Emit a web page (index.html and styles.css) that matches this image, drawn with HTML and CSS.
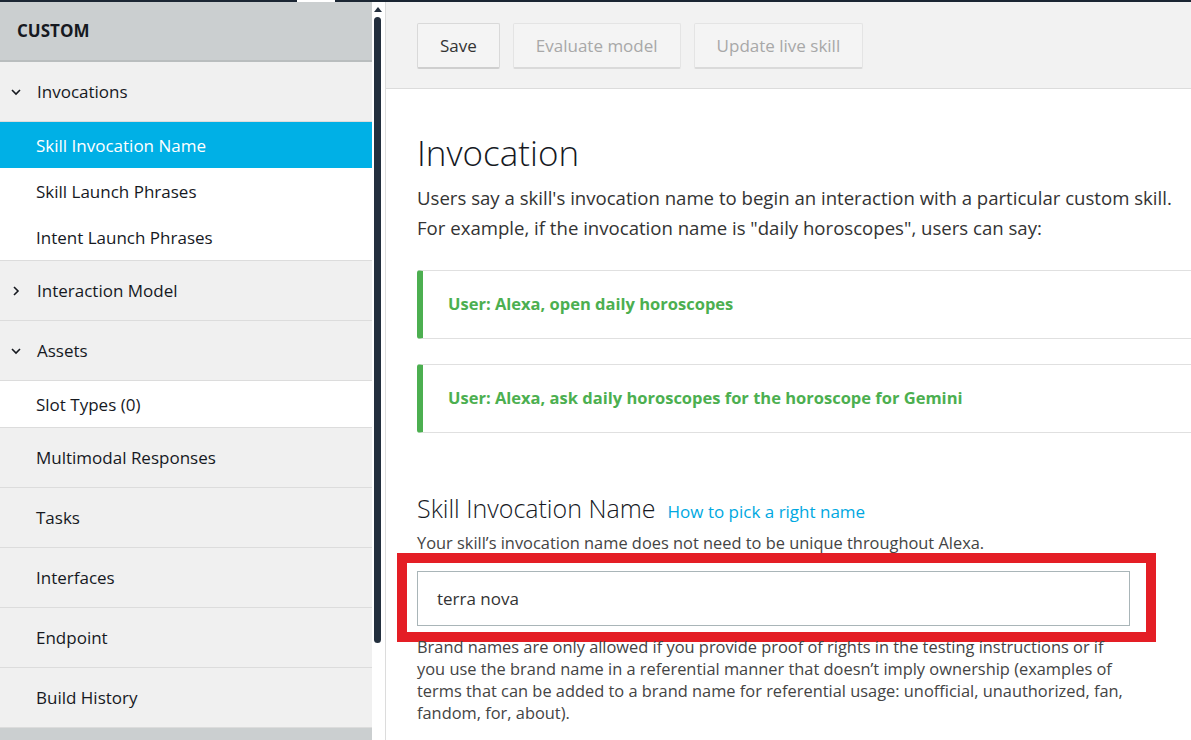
FILE: index.html
```html
<!doctype html>
<html lang="en">
<head>
  <meta charset="UTF-8">
  <title>Invocation - Build</title>
  <link rel="stylesheet" href="styles.css">
</head>
<body>
  <div class="topline"><span class="topline-gap"></span></div>
  <div class="page">
    <div class="sidebar">
      <div class="nav">
        <div class="nav-title">CUSTOM</div>

        <div class="nav-group">
          <svg class="chev" width="10" height="10" viewBox="0 0 10 10"><path d="M1 3 L5 7 L9 3" fill="none" stroke="#16191f" stroke-width="1.6"/></svg>
          Invocations
        </div>
        <div class="nav-children">
          <div class="nav-item active">Skill Invocation Name</div>
          <div class="nav-item">Skill Launch Phrases</div>
          <div class="nav-item">Intent Launch Phrases</div>
        </div>

        <div class="nav-group">
          <svg class="chev" width="10" height="10" viewBox="0 0 10 10"><path d="M3 1 L7 5 L3 9" fill="none" stroke="#16191f" stroke-width="1.6"/></svg>
          Interaction Model
        </div>

        <div class="nav-group">
          <svg class="chev" width="10" height="10" viewBox="0 0 10 10"><path d="M1 3 L5 7 L9 3" fill="none" stroke="#16191f" stroke-width="1.6"/></svg>
          Assets
        </div>
        <div class="nav-children">
          <div class="nav-item">Slot Types (0)</div>
        </div>

        <div class="nav-group plain">Multimodal Responses</div>
        <div class="nav-group plain">Tasks</div>
        <div class="nav-group plain">Interfaces</div>
        <div class="nav-group plain">Endpoint</div>
        <div class="nav-group plain">Build History</div>
        <div class="nav-foot"></div>
      </div>
      <div class="scrollbar">
        <div class="scroll-arrow"></div>
        <div class="scroll-thumb"></div>
      </div>
    </div>

    <div class="main">
      <div class="toolbar">
        <div class="btn">Save</div>
        <div class="btn disabled">Evaluate model</div>
        <div class="btn disabled">Update live skill</div>
      </div>

      <div class="content">
        <h1>Invocation</h1>
        <p class="intro">Users say a skill's invocation name to begin an interaction with a particular custom skill.<br>
          For example, if the invocation name is "daily horoscopes", users can say:</p>

        <div class="example">User: Alexa, open daily horoscopes</div>
        <div class="example">User: Alexa, ask daily horoscopes for the horoscope for Gemini</div>

        <div class="section-head">
          <h2>Skill Invocation Name</h2>
          <span class="link">How to pick a right name</span>
        </div>
        <p class="hint">Your skill’s invocation name does not need to be unique throughout Alexa.</p>

        <div class="highlight">
          <div class="field">terra nova</div>
        </div>

        <p class="note">Brand names are only allowed if you provide proof of rights in the testing instructions or if you use the brand name in a referential manner that doesn’t imply ownership (examples of terms that can be added to a brand name for referential usage: unofficial, unauthorized, fan, fandom, for, about).</p>
      </div>
    </div>
  </div>
</body>
</html>
```

FILE: styles.css
```css
body {
    margin: 0;
    font-family: "Open Sans", Arial, sans-serif;
    color: #16191f;
    background: #fff;
    height: 740px;
    overflow: hidden;
}

.topline {
    height: 2px;
    background: #1b2633;
    display: flex;
}

.topline-gap {
    width: 38px;
    margin-left: 297px;
    background: #fff;
}

.page {
    display: flex;
    height: 738px;
}

/* left navigation */

.sidebar {
    display: flex;
    width: 385px;
    border-right: 1px solid #dcdcdc;
    flex-shrink: 0;
}

.nav {
    width: 372px;
    background: #cbcfd0;
}

.nav-title {
    height: 56px;
    padding-bottom: 2px;
    border-bottom: 2px solid #b9bdbe;
    padding-left: 17px;
    display: flex;
    align-items: center;
    font-size: 17px;
    font-weight: 700;
}

.nav-group {
    height: 59px;
    border-bottom: 1px solid #dcdcdc;
    background: #f0f0f0;
    display: flex;
    align-items: center;
    padding-left: 11px;
    font-size: 17px;
}

.nav-group.plain {
    padding-left: 36px;
}

.nav-group:last-of-type {
    border-bottom: 0;
}

.chev {
    margin-right: 16px;
    margin-top: 1px;
}

.nav-children {
    background: #fff;
    border-bottom: 1px solid #dcdcdc;
}

.nav-item {
    height: 46px;
    display: flex;
    align-items: center;
    padding-left: 36px;
    font-size: 17px;
}

.nav-item.active {
    background: #00b0e6;
    color: #fff;
}

.nav-foot {
    height: 14px;
}

.scrollbar {
    width: 13px;
    background: #fff;
    display: flex;
    flex-direction: column;
    align-items: center;
}

.scroll-arrow {
    width: 0;
    height: 0;
    border-left: 4px solid transparent;
    border-right: 4px solid transparent;
    border-bottom: 5px solid #232f3e;
    margin-top: 5px;
    margin-left: -2px;
}

.scroll-thumb {
    width: 7px;
    height: 626px;
    margin-top: 5px;
    margin-left: -2px;
    border-radius: 4px;
    background: #232f3e;
}

/* main */

.main {
    flex: 1;
    overflow: hidden;
}

.toolbar {
    height: 87px;
    background: #f2f2f2;
    border-bottom: 1px solid #dcdcdc;
    display: flex;
    align-items: flex-start;
    gap: 13px;
    padding-left: 31px;
    box-sizing: border-box;
    padding-top: 21px;
}

.btn {
    height: 43px;
    padding: 0 22px;
    display: flex;
    align-items: center;
    border: 1px solid #d9d9d9;
    border-bottom: 2px solid #cfcfcf;
    border-radius: 2px;
    background: #f4f4f4;
    font-size: 17px;
    color: #333;
}

.btn.disabled {
    color: #a8a8a8;
    border-color: #e4e4e4;
    border-bottom-color: #dadada;
}

.content {
    padding: 40px 0 0 31px;
    width: 900px;
}

h1 {
    margin: 0;
    font-size: 35px;
    font-weight: 300;
    line-height: 48px;
    color: #16191f;
}

.intro {
    margin: 6px 0 27px;
    font-size: 18.6px;
    line-height: 30px;
    color: #333;
}

.example {
    height: 65px;
    padding-bottom: 2px;
    border: 1px solid #e0e0e0;
    border-left: 6px solid #4caf50;
    border-radius: 3px 0 0 3px;
    display: flex;
    align-items: center;
    padding-left: 25px;
    font-size: 16.5px;
    font-weight: 700;
    color: #4caf50;
    margin-bottom: 25px;
}

.example + .example {
    margin-bottom: 26px;
}

.section-head {
    display: flex;
    align-items: baseline;
    gap: 12px;
    margin-top: 60px;
}

h2 {
    margin: 0;
    font-size: 25px;
    font-weight: 300;
    line-height: 30px;
}

.link {
    font-size: 17px;
    color: #00a8e1;
}

.hint {
    margin: 8px 0 -2px;
    font-size: 16.4px;
    line-height: 24px;
    color: #444;
}

.highlight {
    width: 713px;
    margin-left: -20px;
    padding: 8px 16px 6px 10px;
    border: 10px solid #e41e25;
}

.field {
    height: 53px;
    border: 1px solid #a9b5b8;
    display: flex;
    align-items: center;
    padding-left: 19px;
    font-size: 17px;
    color: #333;
}

.note {
    margin: -6px 0 0;
    width: 706px;
    font-size: 16.4px;
    line-height: 22px;
    color: #444;
}
```
